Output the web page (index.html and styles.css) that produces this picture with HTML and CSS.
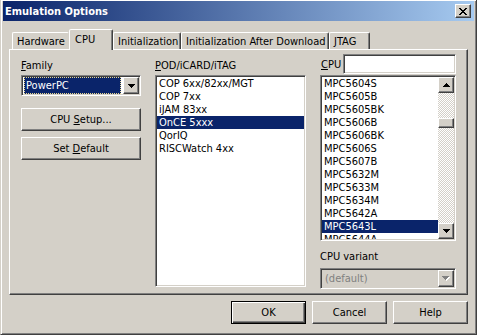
FILE: index.html
```html
<!DOCTYPE html>
<html lang="en">
<head>
    <meta charset="UTF-8">
    <title>Emulation Options</title>
    <link rel="stylesheet" href="styles.css">
</head>
<body>
    <div class="window">
        <div class="titlebar">
            <span class="title">Emulation Options</span>
            <span class="close">
                <svg width="8" height="7" viewBox="0 0 8 7"><path d="M0 0h2v1h1v1h2v-1h1v-1h2v1h-1v1h-1v1h-1v1h1v1h1v1h1v1h-2v-1h-1v-1h-2v1h-1v1h-2v-1h1v-1h1v-1h1v-1h-1v-1h-1v-1h-1z"/></svg>
            </span>
        </div>
        <div class="dialog">
            <div class="tabs">
                <div class="tab tab-prev w-hw">Hardware</div>
                <div class="tab active w-cpu">CPU</div>
                <div class="tab w-init">Initialization</div>
                <div class="tab w-iad">Initialization After Download</div>
                <div class="tab w-jtag">JTAG</div>
            </div>
            <div class="panel">
                <div class="col col-family">
                    <div class="label"><u>F</u>amily</div>
                    <div class="combo sunken">
                        <div class="combo-value">PowerPC</div>
                        <div class="raised arrow-btn">
                            <svg width="7" height="4" viewBox="0 0 7 4"><path d="M0 0H7V1H6V2H5V3H4V4H3V3H2V2H1V1H0Z"/></svg>
                        </div>
                    </div>
                    <button class="btn btn-setup"><span>CPU <u>S</u>etup...</span></button>
                    <button class="btn btn-default"><span>Set <u>D</u>efault</span></button>
                </div>
                <div class="col col-pod">
                    <div class="label"><u>P</u>OD/iCARD/iTAG</div>
                    <div class="list pod-list sunken">
                        <div class="items">
                            <div class="item">COP 6xx/82xx/MGT</div>
                            <div class="item">COP 7xx</div>
                            <div class="item">iJAM 83xx</div>
                            <div class="item sel">OnCE 5xxx</div>
                            <div class="item">QorIQ</div>
                            <div class="item">RISCWatch 4xx</div>
                        </div>
                    </div>
                </div>
                <div class="col col-cpu">
                    <div class="cpu-row">
                        <span class="cpu-label"><u>C</u>PU</span>
                        <div class="cpu-input sunken"></div>
                    </div>
                    <div class="list cpu-list sunken">
                        <div class="items">
                            <div class="item">MPC5604S</div>
                            <div class="item">MPC5605B</div>
                            <div class="item">MPC5605BK</div>
                            <div class="item">MPC5606B</div>
                            <div class="item">MPC5606BK</div>
                            <div class="item">MPC5606S</div>
                            <div class="item">MPC5607B</div>
                            <div class="item">MPC5632M</div>
                            <div class="item">MPC5633M</div>
                            <div class="item">MPC5634M</div>
                            <div class="item">MPC5642A</div>
                            <div class="item sel">MPC5643L</div>
                            <div class="item">MPC5644A</div>
                        </div>
                        <div class="scrollbar">
                            <div class="raised sb-btn">
                                <svg width="7" height="4" viewBox="0 0 7 4"><path d="M3 0H4V1H5V2H6V3H7V4H0V3H1V2H2V1H3Z"/></svg>
                            </div>
                            <div class="raised thumb"></div>
                            <div class="raised sb-btn sb-down">
                                <svg width="7" height="4" viewBox="0 0 7 4"><path d="M0 0H7V1H6V2H5V3H4V4H3V3H2V2H1V1H0Z"/></svg>
                            </div>
                        </div>
                    </div>
                    <div class="label variant-label">CPU variant</div>
                    <div class="combo combo-disabled sunken">
                        <div class="combo-text">(default)</div>
                        <div class="raised arrow-btn">
                            <svg width="8" height="5" viewBox="0 0 8 5"><path fill="#fff" d="M1 1H8V2H7V3H6V4H5V5H4V4H3V3H2V2H1Z"/><path fill="#808080" d="M0 0H7V1H6V2H5V3H4V4H3V3H2V2H1V1H0Z"/></svg>
                        </div>
                    </div>
                </div>
            </div>
            <div class="actions">
                <button class="btn btn-ok"><span>OK</span></button>
                <button class="btn"><span>Cancel</span></button>
                <button class="btn"><span>Help</span></button>
            </div>
        </div>
    </div>
</body>
</html>
```

FILE: styles.css
```css
:root {
    --face: #d4d0c8;
    --shadow: #808080;
    --dark: #404040;
    --select: #0a246a;
}
* { box-sizing: border-box; margin: 0; padding: 0; }
body {
    width: 477px;
    height: 335px;
    overflow: hidden;
    background: var(--face);
    font-family: "DejaVu Sans Condensed", "Liberation Sans", sans-serif;
    font-size: 11px;
    line-height: 13px;
    color: #000;
}
u { text-decoration: underline; text-underline-offset: 1px; }

.window {
    width: 477px;
    height: 335px;
    display: flex;
    flex-direction: column;
    background: var(--face);
    border-left: 1px solid var(--face);
    border-right: 1px solid var(--dark);
    border-bottom: 1px solid var(--dark);
    box-shadow: inset 1px 1px #fff, inset -1px -1px var(--shadow);
    padding: 1px 2px 2px;
}
.titlebar {
    height: 20px;
    display: flex;
    align-items: center;
    justify-content: space-between;
    padding: 0 3px 0 2px;
    background: linear-gradient(90deg, #0a246a, #a6caf0);
    color: #fff;
    font-weight: bold;
}
.close {
    width: 16px;
    height: 14px;
    display: flex;
    align-items: center;
    justify-content: center;
    background: var(--face);
    border: 1px solid;
    border-color: #fff var(--dark) var(--dark) #fff;
    box-shadow: inset -1px -1px var(--shadow);
}

.raised {
    background: var(--face);
    border: 1px solid;
    border-color: #fff var(--dark) var(--dark) #fff;
    box-shadow: inset -1px -1px var(--shadow);
}
.sunken {
    border: 1px solid;
    border-color: var(--shadow) #fff #fff var(--shadow);
    box-shadow: inset 1px 1px var(--dark), inset -1px -1px var(--face);
    padding: 1px;
    background: #fff;
}

.dialog {
    flex: 1;
    display: flex;
    flex-direction: column;
    padding: 8px 6px 0;
}

/* tabs */
.tabs {
    display: flex;
    align-items: flex-end;
    height: 20px;
    padding-left: 3px;
    position: relative;
    z-index: 1;
}
.tab {
    height: 17px;
    border: 1px solid;
    border-bottom: 0;
    border-color: #fff var(--dark) transparent #fff;
    border-radius: 2px 2px 0 0;
    box-shadow: inset -1px 0 var(--shadow);
    padding: 2px 0 0 4px;
    white-space: nowrap;
    overflow: hidden;
}
.tab-prev { border-right-color: transparent; box-shadow: none; }
.tab.active {
    height: 21px;
    margin-bottom: -1px;
    padding: 3px 0 0 5px;
    background: var(--face);
}
.w-hw { width: 57px; }
.w-cpu { width: 44px; }
.w-init { width: 68px; }
.w-iad { width: 148px; }
.w-jtag { width: 41px; }

.panel {
    height: 246px;
    display: flex;
    gap: 14px;
    padding: 4px 0 0 11px;
    border: 1px solid;
    border-color: #fff var(--dark) var(--dark) #fff;
    box-shadow: inset -1px -1px var(--shadow);
}
.col { display: flex; flex-direction: column; }
.col-family { width: 120px; }
.col-pod { width: 151px; }
.col-cpu { width: 136px; }
.label { height: 13px; margin-top: 5px; white-space: nowrap; }

/* combo */
.combo {
    height: 21px;
    margin-top: 3px;
    display: flex;
}
.combo-value {
    flex: 1;
    margin: 0 2px 0 1px;
    padding-left: 1px;
    padding-top: 1px;
    background: var(--select);
    color: #fff;
    border: 1px dotted #e8d890;
}
.arrow-btn {
    width: 16px;
    display: flex;
    align-items: center;
    justify-content: center;
}
.combo-disabled { background: var(--face); margin-top: 5px; }
.combo-text {
    flex: 1;
    color: var(--shadow);
    padding: 2px 0 0 3px;
}

/* buttons */
.btn {
    height: 23px;
    display: flex;
    align-items: center;
    justify-content: center;
    font: inherit;
    color: #000;
    background: var(--face);
    border: 1px solid;
    border-color: #fff var(--dark) var(--dark) #fff;
    box-shadow: inset -1px -1px var(--shadow);
    padding: 0;
}
.btn span { white-space: pre; }
.btn-setup { margin-top: 12px; }
.btn-default { margin-top: 6px; }
.btn-ok {
    border-color: #000;
    box-shadow: inset 1px 1px #fff, inset -1px -1px var(--dark), inset -2px -2px var(--shadow);
}

/* lists */
.list {
    display: flex;
    overflow: hidden;
    margin-top: 3px;
}
.pod-list { height: 212px; }
.cpu-list { height: 166px; margin-top: 1px; }
.items { flex: 1; overflow: hidden; }
.item {
    height: 13px;
    padding-left: 2px;
    white-space: nowrap;
}
.item.sel { background: var(--select); color: #fff; }

.cpu-row {
    height: 20px;
    display: flex;
    align-items: center;
}
.cpu-label { padding-left: 1px; }
.cpu-input { width: 113px; height: 20px; margin-left: auto; }

.scrollbar {
    width: 16px;
    display: flex;
    flex-direction: column;
    background: repeating-conic-gradient(#fff 0 25%, var(--face) 0 50%) 0 0 / 2px 2px;
}
.sb-btn {
    height: 16px;
    display: flex;
    align-items: center;
    justify-content: center;
}
.thumb { height: 10px; margin-top: 25px; }
.sb-down { margin-top: auto; }

.variant-label { margin-top: 9px; }

.actions {
    display: flex;
    justify-content: flex-end;
    gap: 6px;
    margin-top: 6px;
}
.actions .btn { width: 75px; }
```
